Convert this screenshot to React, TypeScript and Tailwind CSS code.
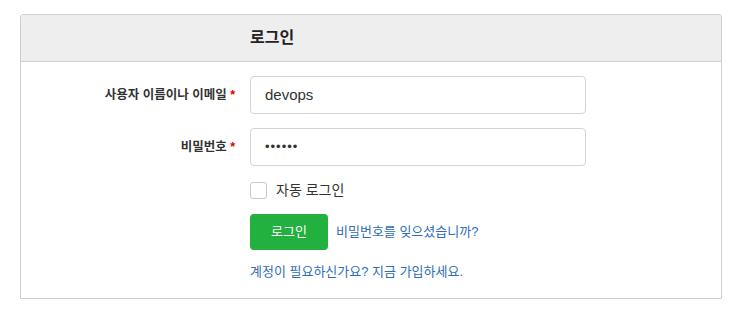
import React from "react";

const font = { fontFamily: '"Liberation Sans", "Noto Sans CJK KR", sans-serif' };

export default function App() {
  return (
    <div className="w-[735px] h-[312px] bg-white pt-[14px] pl-[20px]" style={font}>
      <div className="w-[702px] h-[285px] border border-[#cfcfcf] rounded-t-[3px]">
        <div className="h-[47px] bg-[#eeeeee] border-b border-[#cfcfcf] flex items-center pl-[229px] rounded-t-[3px]">
          <span className="text-[16px] font-bold text-[#222]">로그인</span>
        </div>
        <div className="pt-[14px]">
          <div className="flex items-center">
            <label className="w-[229px] pr-[15px] text-right text-[12.5px] font-bold text-[#333]">
              사용자 이름이나 이메일 <span className="text-[#d00]">*</span>
            </label>
            <div className="w-[336px] h-[38px] border border-[#d4d4d4] rounded-[4px] flex items-center pl-[14px] text-[15px] text-[#333]">
              devops
            </div>
          </div>
          <div className="flex items-center mt-[14px]">
            <label className="w-[229px] pr-[15px] text-right text-[12.5px] font-bold text-[#333]">
              비밀번호 <span className="text-[#d00]">*</span>
            </label>
            <div className="w-[336px] h-[38px] border border-[#d4d4d4] rounded-[4px] flex items-center pl-[14px] text-[13px] text-[#333] tracking-[1px]">
              ••••••
            </div>
          </div>
          <div className="flex items-center h-[17px] mt-[16px] pl-[229px]">
            <div className="w-[17px] h-[17px] border border-[#c8c8c8] rounded-[3px] bg-white" />
            <span className="ml-[9px] text-[14px] leading-[17px] text-[#333]">자동 로그인</span>
          </div>
          <div className="flex items-center mt-[15px] pl-[229px]">
            <button className="w-[78px] h-[36px] bg-[#22b03e] rounded-[4px] text-white text-[13px]">
              로그인
            </button>
            <a className="ml-[8px] text-[13px] text-[#2f6eb5]">비밀번호를 잊으셨습니까?</a>
          </div>
          <div className="mt-[13px] pl-[229px] text-[13px] leading-[18px] text-[#2f6eb5]">
            계정이 필요하신가요? 지금 가입하세요.
          </div>
        </div>
      </div>
    </div>
  );
}
